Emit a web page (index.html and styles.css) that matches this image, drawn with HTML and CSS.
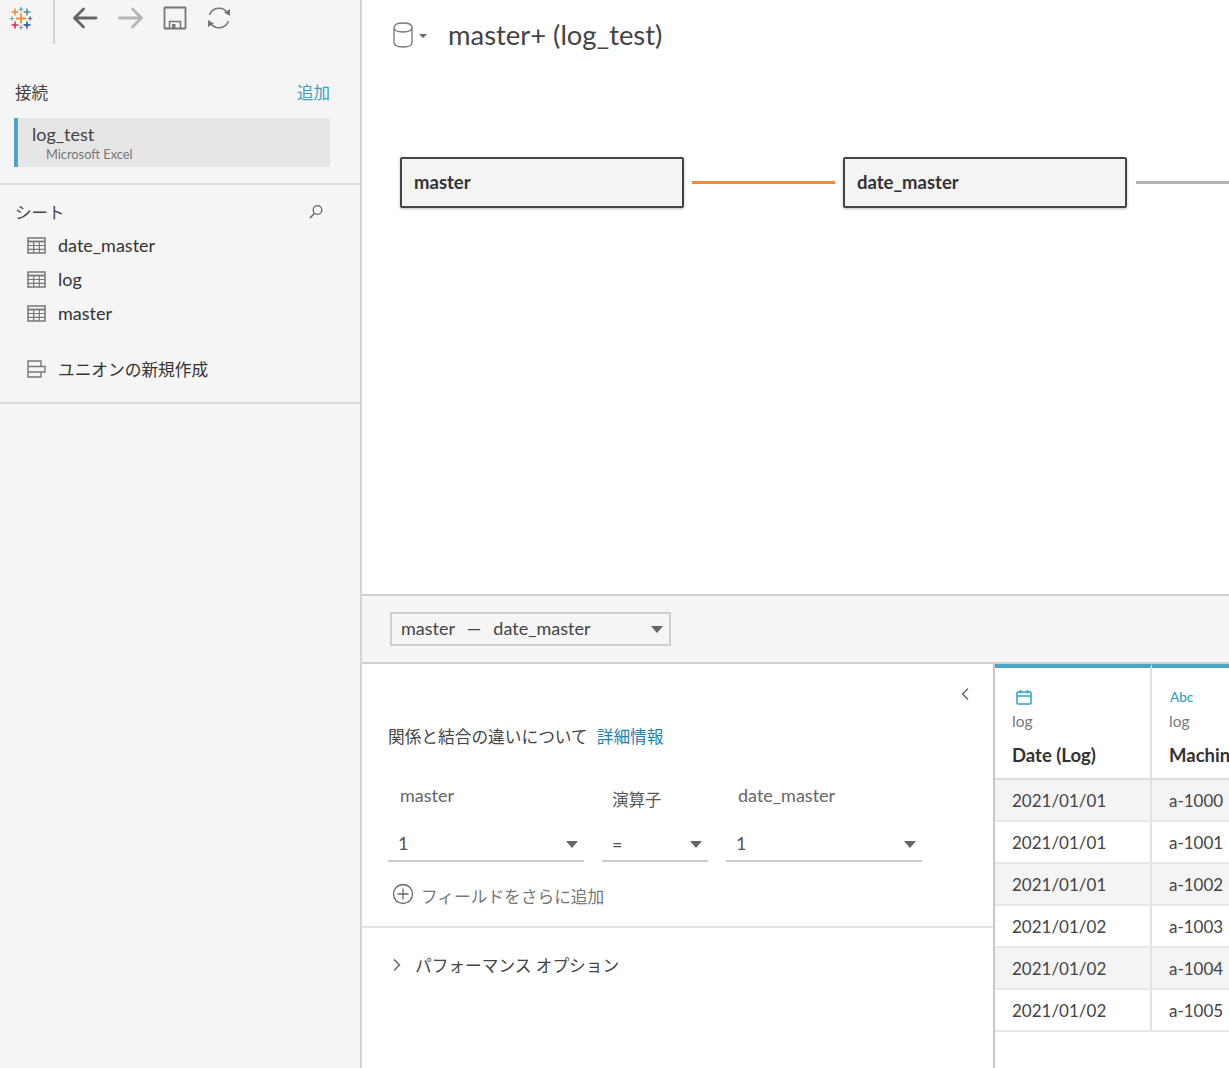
FILE: index.html
```html
<!DOCTYPE html>
<html lang="ja">
<head>
  <meta charset="UTF-8" />
  <title>master+ (log_test)</title>
  <link rel="stylesheet" href="styles.css">
</head>
<body>
  <aside class="sidebar">
    <div class="toolbar">
      <div class="logo-cell">
        <svg width="24" height="24" viewBox="0 0 24 24" class="logo">
          <g fill="none" stroke-linecap="butt">
            <path d="M12 6.500v10M7 11.500h10" stroke="#f28e2b" stroke-width="1.800"/>
            <path d="M6 1.500v7M2.500 5h7" stroke="#f28e2b" stroke-width="1.500"/>
            <path d="M18 1.500v7M14.500 5h7" stroke="#4e8ba8" stroke-width="1.500"/>
            <path d="M6 14.500v7M2.500 18h7" stroke="#e0294f" stroke-width="1.500"/>
            <path d="M18 14.500v7M14.500 18h7" stroke="#1f4f8f" stroke-width="1.500"/>
            <path d="M12 0v4.500M9.750 2.250h4.500" stroke="#5f9fb5" stroke-width="1.200"/>
            <path d="M3 9.250v4.500M.75 11.500h4.500" stroke="#6fa8b8" stroke-width="1.200"/>
            <path d="M21 9.250v4.500M18.750 11.500h4.500" stroke="#5c6ba8" stroke-width="1.200"/>
            <path d="M12 18.250v4.500M9.750 20.500h4.500" stroke="#8f9cc4" stroke-width="1.200"/>
          </g>
        </svg>
      </div>
      <div class="tools">
        <svg width="26" height="24" viewBox="0 0 26 24" class="tool"><path d="M24 12H2.500M11.500 3L2.500 12l9 9" fill="none" stroke="#666" stroke-width="2.800" stroke-linecap="round" stroke-linejoin="round"/></svg>
        <svg width="26" height="24" viewBox="0 0 26 24" class="tool tool-next"><path d="M1.500 12h22M14.500 3l9 9-9 9" fill="none" stroke="#b5b5b5" stroke-width="2.800" stroke-linecap="round" stroke-linejoin="round"/></svg>
        <svg width="24" height="24" viewBox="0 0 24 24" class="tool"><path d="M2 1.500h20a.5.5 0 0 1 .5.5v20a.5.5 0 0 1-.5.5H2a.5.5 0 0 1-.5-.5V2a.5.5 0 0 1 .5-.5z" fill="none" stroke="#777" stroke-width="1.800"/><path d="M6.500 22v-6.500h11V22" fill="none" stroke="#777" stroke-width="1.500"/><rect x="9" y="18" width="3.500" height="4" fill="#777"/></svg>
        <svg width="24" height="24" viewBox="0 0 24 24" class="tool tool-sync"><path d="M2.500 9A10 10 0 0 1 20.500 7M21.500 15A10 10 0 0 1 3.500 17" fill="none" stroke="#777" stroke-width="1.500"/><path d="M23 3v7l-6-3.500zM1 21v-7l6 3.500z" fill="#777"/></svg>
      </div>
    </div>

    <section class="connections">
      <div class="side-head">
        <span>接続</span>
        <a class="add-link">追加</a>
      </div>
      <div class="conn-item">
        <div class="conn-name">log_test</div>
        <div class="conn-type">Microsoft Excel</div>
      </div>
    </section>

    <section class="sheets">
      <div class="side-head sheets-head">
        <span>シート</span>
        <svg width="16" height="16" viewBox="0 0 16 16" class="search"><circle cx="9.500" cy="6" r="4.300" fill="none" stroke="#666" stroke-width="1.300"/><path d="M6.500 9.300L2 14" stroke="#666" stroke-width="1.600"/></svg>
      </div>
      <div class="sheet-row">
        <svg width="19" height="17" viewBox="0 0 19 17" class="sheet-icon"><use href="#table-icon"/></svg>
        <span>date_master</span>
      </div>
      <div class="sheet-row">
        <svg width="19" height="17" viewBox="0 0 19 17" class="sheet-icon"><use href="#table-icon"/></svg>
        <span>log</span>
      </div>
      <div class="sheet-row">
        <svg width="19" height="17" viewBox="0 0 19 17" class="sheet-icon"><use href="#table-icon"/></svg>
        <span>master</span>
      </div>
      <div class="sheet-row union-row">
        <svg width="19" height="18" viewBox="0 0 19 18" class="sheet-icon"><path d="M1 1h13v5.500H1zM1 6.500h17V12H1zM1 12h13v5H1z" fill="none" stroke="#777" stroke-width="1.400"/></svg>
        <span>ユニオンの新規作成</span>
      </div>
    </section>
  </aside>

  <main class="main">
    <section class="canvas">
      <header class="title-row">
        <svg width="20" height="26" viewBox="0 0 20 26" class="db-icon"><path d="M1 5.500C1 2.500 4.500 1 10 1s9 1.500 9 4.500v15c0 3-3.500 4.500-9 4.500s-9-1.500-9-4.500zM1 5.500c0 3 3.500 4.500 9 4.500s9-1.500 9-4.500" fill="none" stroke="#777" stroke-width="1.300"/></svg>
        <span class="db-caret"></span>
        <h1>master+ (log_test)</h1>
      </header>
      <div class="flow">
        <div class="node">master</div>
        <div class="link link-orange"></div>
        <div class="node">date_master</div>
        <div class="link link-grey"></div>
      </div>
    </section>

    <div class="rel-bar">
      <div class="rel-select">
        <span class="rel-text">master&nbsp; — &nbsp;date_master</span>
        <span class="caret"></span>
      </div>
    </div>

    <section class="bottom">
      <div class="join-panel">
        <div class="collapse-row">
          <svg width="10" height="14" viewBox="0 0 10 14"><path d="M8 1.500L2.500 7 8 12.500" fill="none" stroke="#666" stroke-width="1.500"/></svg>
        </div>
        <p class="about">関係と結合の違いについて<a class="more-link">詳細情報</a></p>
        <div class="field-grid">
          <div class="field field-left">
            <label class="field-label">master</label>
            <div class="field-select"><span class="field-value">1</span><span class="caret"></span></div>
          </div>
          <div class="field field-op">
            <label class="field-label op-label">演算子</label>
            <div class="field-select"><span class="field-value">=</span><span class="caret"></span></div>
          </div>
          <div class="field field-right">
            <label class="field-label">date_master</label>
            <div class="field-select"><span class="field-value">1</span><span class="caret"></span></div>
          </div>
        </div>
        <div class="add-field">
          <svg width="22" height="22" viewBox="0 0 22 22" class="add-icon"><circle cx="11" cy="11" r="9.500" fill="none" stroke="#666" stroke-width="1.300"/><path d="M11 5.500v11M5.500 11h11" stroke="#666" stroke-width="1.300"/></svg>
          <span>フィールドをさらに追加</span>
        </div>
        <div class="perf-row">
          <svg width="10" height="14" viewBox="0 0 10 14"><path d="M2 1.500L7.500 7 2 12.500" fill="none" stroke="#666" stroke-width="1.500"/></svg>
          <span>パフォーマンス オプション</span>
        </div>
      </div>

      <div class="preview">
        <div class="col">
          <div class="col-head">
            <div class="type-icon">
              <svg width="16" height="16" viewBox="0 0 16 16"><path d="M2 3h12a1 1 0 0 1 1 1v10a1 1 0 0 1-1 1H2a1 1 0 0 1-1-1V4a1 1 0 0 1 1-1zM1 7h14M4.500 1v3.500M11.500 1v3.500" fill="none" stroke="#2f9fbf" stroke-width="1.500"/></svg>
            </div>
            <div class="col-source">log</div>
            <div class="col-name">Date (Log)</div>
          </div>
          <div class="cell shade">2021/01/01</div>
          <div class="cell">2021/01/01</div>
          <div class="cell shade">2021/01/01</div>
          <div class="cell">2021/01/02</div>
          <div class="cell shade">2021/01/02</div>
          <div class="cell">2021/01/02</div>
        </div>
        <div class="col">
          <div class="col-head">
            <div class="type-icon abc">Abc</div>
            <div class="col-source">log</div>
            <div class="col-name">Machine</div>
          </div>
          <div class="cell shade">a-1000</div>
          <div class="cell">a-1001</div>
          <div class="cell shade">a-1002</div>
          <div class="cell">a-1003</div>
          <div class="cell shade">a-1004</div>
          <div class="cell">a-1005</div>
        </div>
      </div>
    </section>
  </main>

  <svg width="0" height="0" class="defs">
    <defs>
      <g id="table-icon" fill="none" stroke="#777">
        <rect x="1" y="1" width="17" height="15" stroke-width="1.500"/>
        <path d="M1 4.500h17" stroke-width="1.800"/>
        <path d="M1 8.500h17M1 12.300h17M6.700 4.500V16M12.300 4.500V16" stroke-width="1.200"/>
      </g>
    </defs>
  </svg>
</body>
</html>
```

FILE: styles.css
```css
* {
  box-sizing: border-box;
}
html, body {
  height: 100%;
}
body {
  margin: 0;
  display: flex;
  width: 1229px;
  height: 1068px;
  overflow: hidden;
  background: #fff;
  color: #333;
  font-family: Lato, "Noto Sans CJK JP", sans-serif;
  font-size: 18px;
}
svg {
  display: block;
  flex: none;
}
.defs {
  position: absolute;
}

/* sidebar */
.sidebar {
  width: 362px;
  flex: none;
  background: #f5f5f5;
  border-right: 2px solid #d4d4d4;
}
.toolbar {
  display: flex;
  height: 44px;
}
.logo-cell {
  width: 55px;
  border-right: 2px solid #d4d4d4;
  padding: 7px 0 0 9px;
}
.tools {
  display: flex;
  gap: 19px;
  padding: 6px 0 0 17px;
}
.tool-next {
  margin-left: 1px;
}
.tool-sync {
  margin-left: 1px;
}
.connections {
  height: 141px;
  padding: 35px 30px 0 14px;
  border-bottom: 2px solid #d9d9d9;
}
.side-head {
  display: flex;
  justify-content: space-between;
  align-items: center;
  height: 26px;
  font-size: 16.500px;
  color: #444;
  padding-left: 1px;
}
.add-link {
  color: #3a9fc4;
}
.conn-item {
  height: 49px;
  margin-top: 13px;
  padding: 4px 0 0 14px;
  background: #e6e6e6;
  border-left: 4px solid #4ba5c9;
}
.conn-name {
  font-size: 18px;
  line-height: 24px;
  color: #444;
}
.conn-type {
  font-size: 12.800px;
  line-height: 17px;
  padding-left: 14px;
  color: #777;
}
.sheets {
  height: 219px;
  padding: 14px 30px 0 14px;
  border-bottom: 2px solid #d9d9d9;
}
.sheets-head {
  padding-right: 6px;
  margin-bottom: 3px;
}
.sheet-row {
  display: flex;
  align-items: center;
  gap: 12px;
  height: 34px;
  padding-left: 13px;
  color: #333;
  font-size: 18px;
}
.union-row {
  margin-top: 22px;
  font-size: 16.700px;
}

/* main area */
.main {
  flex: 1;
  min-width: 0;
  display: flex;
  flex-direction: column;
}
.canvas {
  height: 596px;
  flex: none;
  border-bottom: 2px solid #d0d0d0;
  overflow: hidden;
}
.title-row {
  display: flex;
  align-items: center;
  height: 70px;
  padding-left: 31px;
}
.title-row h1 {
  margin: 0 0 2px 21px;
  font-size: 27.400px;
  font-weight: 400;
  color: #444;
}
.db-caret {
  margin-left: 6px;
  margin-top: 2px;
  border-top: 4px solid #666;
  border-left: 4px solid transparent;
  border-right: 4px solid transparent;
}
.flow {
  display: flex;
  align-items: center;
  margin-top: 87px;
  padding-left: 38px;
}
.node {
  width: 284px;
  height: 51px;
  flex: none;
  display: flex;
  align-items: center;
  padding: 0 0 2px 12px;
  background: #f4f4f4;
  border: 2px solid #444;
  border-radius: 2px;
  box-shadow: 0 1px 3px rgba(0, 0, 0, .25);
  font-size: 18.500px;
  font-weight: 700;
  color: #333;
}
.link {
  height: 3px;
  flex: none;
  margin-top: -1px;
}
.link-orange {
  width: 143px;
  margin: -1px 8px 0;
  background: #f58a33;
}
.link-grey {
  width: 100px;
  margin-left: 9px;
  background: #b2b2b2;
}
.rel-bar {
  height: 68px;
  flex: none;
  padding: 16px 0 0 28px;
  background: #f5f5f5;
  border-bottom: 2px solid #d0d0d0;
}
.rel-select {
  width: 281px;
  height: 34px;
  display: flex;
  justify-content: space-between;
  align-items: center;
  padding: 0 6px 0 9px;
  border: 2px solid #cfcfcf;
  font-size: 18px;
  color: #444;
}
.rel-text {
  margin-bottom: 2px;
  word-spacing: 1.500px;
}
.caret {
  width: 0;
  height: 0;
  flex: none;
  border-top: 7px solid #666;
  border-left: 6px solid transparent;
  border-right: 6px solid transparent;
}

/* join panel */
.bottom {
  flex: 1;
  display: flex;
  min-height: 0;
}
.join-panel {
  width: 633px;
  flex: none;
  border-right: 2px solid #c8c8c8;
}
.collapse-row {
  display: flex;
  justify-content: flex-end;
  padding: 23px 23px 0 0;
  height: 36px;
}
.about {
  margin: 22px 0 0 26px;
  font-size: 16.700px;
  line-height: 30px;
  color: #444;
}
.more-link {
  margin-left: 9px;
  color: #1f7fb0;
}
.field-grid {
  display: flex;
  gap: 18px;
  margin: 29px 0 0 26px;
  height: 81px;
}
.field {
  display: flex;
  flex-direction: column;
}
.field-left {
  width: 196px;
}
.field-op {
  width: 106px;
}
.field-right {
  width: 196px;
}
.field-label {
  height: 30px;
  line-height: 28px;
  padding-left: 12px;
  font-size: 18px;
  color: #666;
}
.op-label {
  padding-left: 10px;
  padding-top: 4px;
  line-height: 30px;
  font-size: 16.500px;
  color: #555;
}
.field-select {
  display: flex;
  justify-content: space-between;
  align-items: center;
  height: 34px;
  margin-top: 18px;
  padding: 0 6px 0 10px;
  border-bottom: 2px solid #ccc;
  font-size: 18px;
  color: #555;
}
.field-value {
  margin-bottom: 2px;
}
.add-field {
  display: flex;
  align-items: center;
  gap: 7px;
  height: 40px;
  margin: 14px 0 10px 30px;
  font-size: 16.700px;
  color: #777;
}
.add-icon {
  margin-top: -4px;
}
.perf-row {
  display: flex;
  align-items: center;
  gap: 13px;
  height: 76px;
  padding-left: 30px;
  border-top: 2px solid #e4e4e4;
  font-size: 16.700px;
  color: #444;
}

/* data preview */
.preview {
  flex: 1;
  display: flex;
  overflow: hidden;
  min-width: 0;
}
.col {
  width: 157px;
  flex: none;
}
.col-head {
  height: 116px;
  padding: 0 0 0 17px;
  border-top: 4px solid #4ba5c9;
  border-right: 2px solid #e2e2e2;
  border-bottom: 2px solid #dcdcdc;
}
.type-icon {
  height: 20px;
  margin-top: 21px;
  padding-left: 4px;
}
.abc {
  padding-left: 1px;
  font-size: 13.500px;
  font-weight: 500;
  line-height: 16px;
  color: #2f9fbf;
}
.col-source {
  margin-top: 1px;
  line-height: 22px;
  font-size: 15.500px;
  color: #777;
}
.col-name {
  margin-top: 12px;
  line-height: 22px;
  font-size: 18.500px;
  font-weight: 700;
  color: #333;
  white-space: nowrap;
}
.cell {
  height: 42px;
  line-height: 42px;
  padding-left: 17px;
  border-right: 2px solid #e2e2e2;
  border-bottom: 2px solid #e8e8e8;
  font-size: 17px;
  color: #444;
}
.shade {
  background: #f4f4f4;
}
```
